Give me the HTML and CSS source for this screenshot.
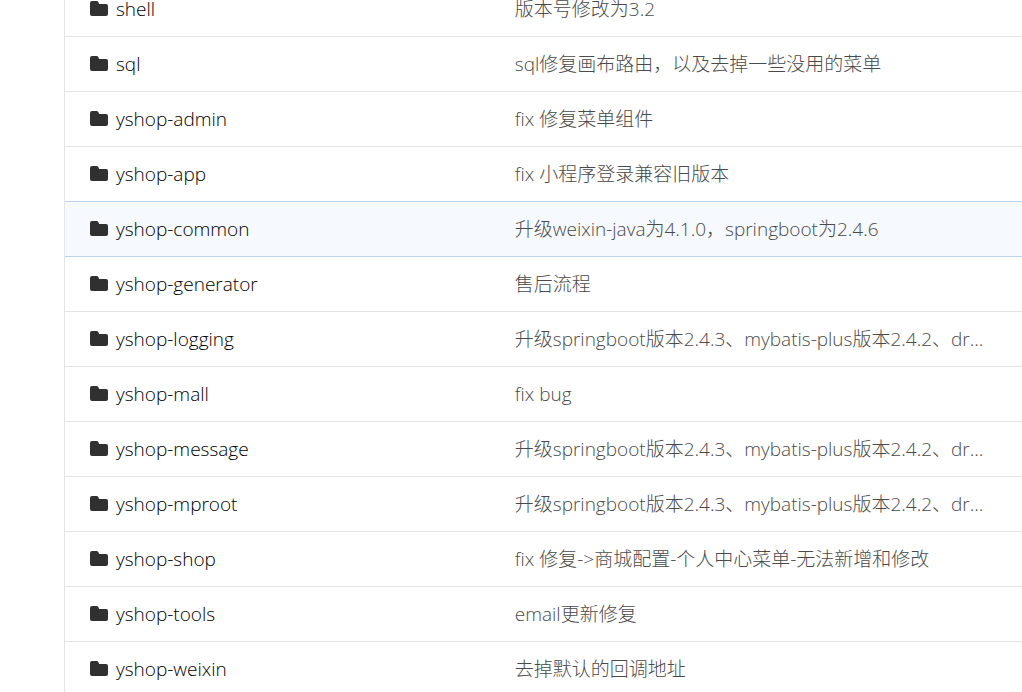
FILE: index.html
```html
<!DOCTYPE html>
<html lang="zh-CN">
<head>
  <meta charset="UTF-8">
  <meta name="viewport" content="width=device-width, initial-scale=1.0">
  <title>yshop</title>
  <link rel="stylesheet" href="styles.css">
</head>
<body>
  <svg class="sprite" aria-hidden="true">
    <symbol id="folder" viewBox="0 0 18 16">
      <path d="M2 0h4.500a2 2 0 0 1 1.800 1.100l0.900 1.900h6.800a2 2 0 0 1 2 2v8a2 2 0 0 1-2 2H2a2 2 0 0 1-2-2v-11a2 2 0 0 1 2-2z"/>
    </symbol>
  </svg>
  <table class="tree">
    <tbody>
      <tr>
        <td class="name"><a href="#"><svg class="icon"><use href="#folder"/></svg>shell</a></td>
        <td class="message"><a href="#">版本号修改为3.2</a></td>
      </tr>
      <tr>
        <td class="name"><a href="#"><svg class="icon"><use href="#folder"/></svg>sql</a></td>
        <td class="message"><a href="#">sql修复画布路由，以及去掉一些没用的菜单</a></td>
      </tr>
      <tr>
        <td class="name"><a href="#"><svg class="icon"><use href="#folder"/></svg>yshop-admin</a></td>
        <td class="message"><a href="#">fix 修复菜单组件</a></td>
      </tr>
      <tr>
        <td class="name"><a href="#"><svg class="icon"><use href="#folder"/></svg>yshop-app</a></td>
        <td class="message"><a href="#">fix 小程序登录兼容旧版本</a></td>
      </tr>
      <tr class="active">
        <td class="name"><a href="#"><svg class="icon"><use href="#folder"/></svg>yshop-common</a></td>
        <td class="message"><a href="#">升级weixin-java为4.1.0，springboot为2.4.6</a></td>
      </tr>
      <tr>
        <td class="name"><a href="#"><svg class="icon"><use href="#folder"/></svg>yshop-generator</a></td>
        <td class="message"><a href="#">售后流程</a></td>
      </tr>
      <tr>
        <td class="name"><a href="#"><svg class="icon"><use href="#folder"/></svg>yshop-logging</a></td>
        <td class="message"><a href="#">升级springboot版本2.4.3、mybatis-plus版本2.4.2、dr...</a></td>
      </tr>
      <tr>
        <td class="name"><a href="#"><svg class="icon"><use href="#folder"/></svg>yshop-mall</a></td>
        <td class="message"><a href="#">fix bug</a></td>
      </tr>
      <tr>
        <td class="name"><a href="#"><svg class="icon"><use href="#folder"/></svg>yshop-message</a></td>
        <td class="message"><a href="#">升级springboot版本2.4.3、mybatis-plus版本2.4.2、dr...</a></td>
      </tr>
      <tr>
        <td class="name"><a href="#"><svg class="icon"><use href="#folder"/></svg>yshop-mproot</a></td>
        <td class="message"><a href="#">升级springboot版本2.4.3、mybatis-plus版本2.4.2、dr...</a></td>
      </tr>
      <tr>
        <td class="name"><a href="#"><svg class="icon"><use href="#folder"/></svg>yshop-shop</a></td>
        <td class="message"><a href="#">fix 修复-&gt;商城配置-个人中心菜单-无法新增和修改</a></td>
      </tr>
      <tr>
        <td class="name"><a href="#"><svg class="icon"><use href="#folder"/></svg>yshop-tools</a></td>
        <td class="message"><a href="#">email更新修复</a></td>
      </tr>
      <tr>
        <td class="name"><a href="#"><svg class="icon"><use href="#folder"/></svg>yshop-weixin</a></td>
        <td class="message"><a href="#">去掉默认的回调地址</a></td>
      </tr>
    </tbody>
  </table>
</body>
</html>
```

FILE: styles.css
```css
body {
  margin: 0;
  padding-left: 64px;
  height: 100vh;
  overflow: hidden;
  box-sizing: border-box;
  background-color: #fff;
  font-family: "Open Sans", "Noto Sans CJK SC", sans-serif;
  font-size: 19px;
  font-weight: 300;
  line-height: 28px;
}

.sprite {
  display: none;
}

.tree {
  width: 100%;
  margin-top: -19px;
  border-spacing: 0;
  border-left: 1px solid #e3e4e5;
  table-layout: fixed;
}

.tree td {
  height: 54px;
  padding: 0;
  border-top: 1px solid #e3e4e5;
  white-space: nowrap;
}

.tree .name {
  width: 47%;
}

.tree a {
  text-decoration: none;
}

.name a {
  display: flex;
  align-items: center;
  gap: 8px;
  padding-left: 25px;
  color: #000;
}

.message a {
  color: #4a4a4a;
}

.icon {
  width: 18px;
  height: 16px;
  fill: #303030;
}

.tree .active td {
  background-color: #f6f9fe;
}

.tree .active td,
.tree .active + tr td {
  border-top-color: #b8d4ef;
}
```
